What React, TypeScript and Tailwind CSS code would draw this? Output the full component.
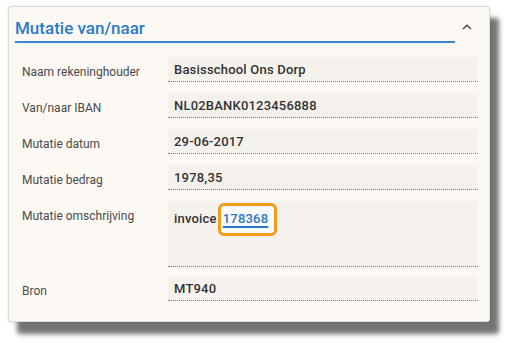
import React from 'react';

const rows = [
  { label: 'Naam rekeninghouder', value: 'Basisschool Ons Dorp' },
  { label: 'Van/naar IBAN', value: 'NL02BANK0123456888' },
  { label: 'Mutatie datum', value: '29-06-2017' },
  { label: 'Mutatie bedrag', value: '1978,35' },
];

function Row({ label, children, tall }: { label: string; children: React.ReactNode; tall?: boolean }) {
  return (
    <div className={`flex ${tall ? 'mb-[9px]' : 'mb-[11px]'}`}>
      <div className="w-[146px] pt-[6px] text-[12px] leading-[18px] text-[#4a4a4a]">{label}</div>
      <div
        className={`w-[310px] bg-[#f5f2ee] border-b border-dotted border-[#7a7a7a] pl-[6px] text-[13px] leading-[18px] font-medium tracking-[0.2px] text-[#333] ${
          tall ? 'h-[66px] pt-[9px]' : 'h-[25px] pt-[4px]'
        }`}
      >
        {children}
      </div>
    </div>
  );
}

export default function App() {
  return (
    <div className="min-h-screen bg-white pt-[6px] pl-[8px]" style={{ fontFamily: 'Roboto, "Noto Sans", sans-serif' }}>
      <div className="w-[482px] h-[316px] bg-[#fcf9f5] border border-[#dedad5] rounded-[3px] shadow-[9px_12px_5px_rgba(0,0,0,0.55),0_0_3px_rgba(0,0,0,0.12)]">
        {/* Header */}
        <div className="flex pl-[6px]">
          <div className="flex-1 pt-[10px] pb-[2px] border-b-2 border-[#3f84c8]">
            <h2 className="text-[17px] leading-[22px] font-medium text-[#2a7bc9]">Mutatie van/naar</h2>
          </div>
          <div className="w-[34px] pl-[7px] pt-[17px]">
            <svg width="10" height="6" viewBox="0 0 10 6" fill="none">
              <polyline points="1,5 5,1.2 9,5" stroke="#444" strokeWidth="1.4" />
            </svg>
          </div>
        </div>

        {/* Rows */}
        <div className="mt-[14px] pl-[13px]">
          {rows.map((r) => (
            <Row key={r.label} label={r.label}>
              {r.value}
            </Row>
          ))}
          <Row label="Mutatie omschrijving" tall>
            invoice
            <span className="inline-block ml-[1px] -mt-[7px] -mb-[8px] border-[3px] border-[#f59b1c] rounded-[6px] bg-[#f8fafc] pt-[4px] pb-[5px] pl-[2px] pr-[6px] align-baseline">
              <a href="#" className="text-[#2a78c6] underline decoration-2 underline-offset-[3px]">
                178368
              </a>
            </span>
          </Row>
          <Row label="Bron">MT940</Row>
        </div>
      </div>
    </div>
  );
}
